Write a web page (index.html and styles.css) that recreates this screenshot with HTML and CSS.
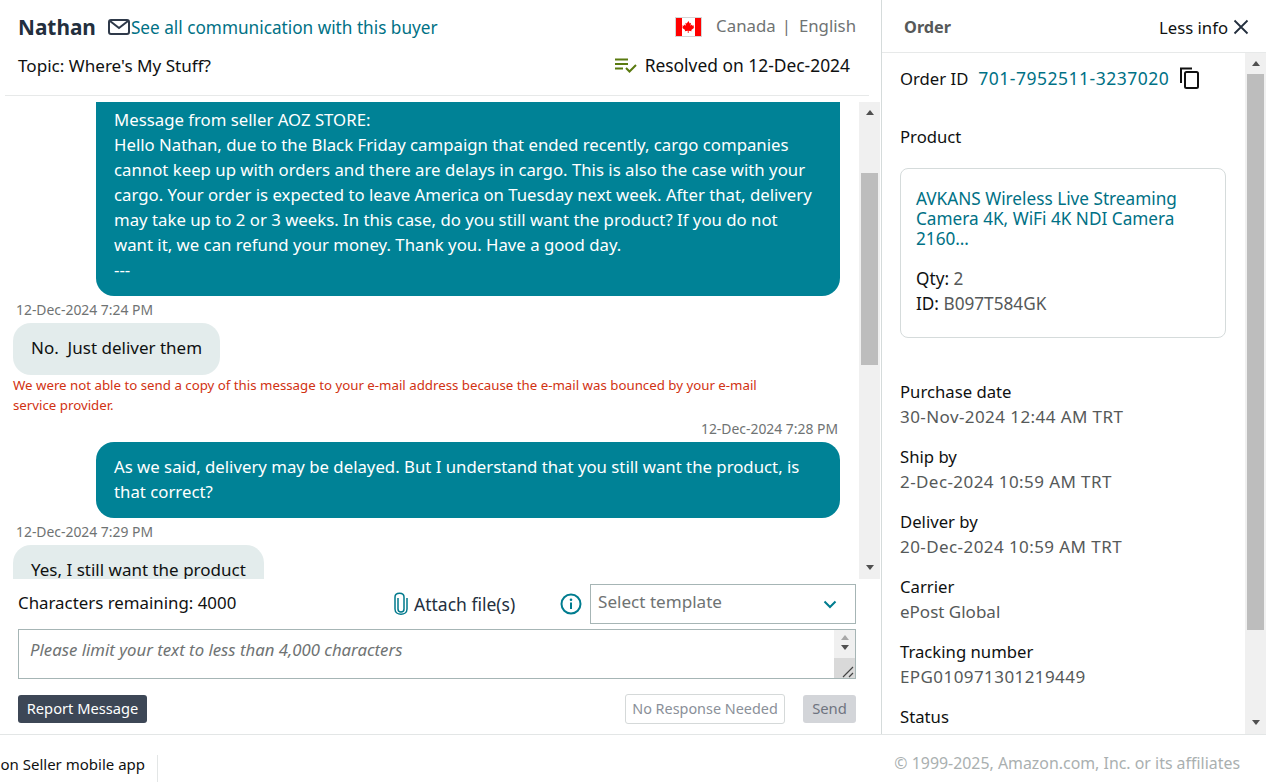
FILE: index.html
```html
<!DOCTYPE html>
<html lang="en">
<head>
<meta charset="utf-8">
<title>Buyer messages</title>
<link rel="stylesheet" href="styles.css">
</head>
<body>
<div class="page">
  <main class="main">
    <section class="convo">
      <header class="head">
        <div class="head-row first">
          <div class="who">
            <span class="name">Nathan</span>
            <svg class="mail" width="22" height="18" viewBox="0 0 22 18"><rect x="1" y="2" width="20" height="14" rx="2" fill="none" stroke="#2f3a4a" stroke-width="2"/><path d="M2 3l9 7 9-7" fill="none" stroke="#2f3a4a" stroke-width="2"/></svg>
            <a class="link see-all">See all communication with this buyer</a>
          </div>
          <div class="locale">
            <svg class="flag" width="27" height="20" viewBox="0 0 27 20"><rect x=".5" y=".5" width="26" height="19" fill="#fff" stroke="#d5d5d5"/><rect x="1" y="1" width="6" height="18" fill="#f00"/><rect x="20" y="1" width="6" height="18" fill="#f00"/><path d="M13.500 4l1.200 2.400 1.300-.6-.5 3 1.500-1.300.4 1.200 1.700-.3-.6 1.800.8.5-3 2.400.3 1.100-3-.4v2.200h-.8v-2.200l-3 .4.3-1.100-3-2.400.8-.5-.6-1.800 1.700.3.4-1.200 1.500 1.300-.5-3 1.300.6z" fill="#f00"/></svg>
            <span class="locale-text">Canada</span><span class="locale-sep">|</span><span class="locale-text">English</span>
          </div>
        </div>
        <div class="head-row second">
          <div class="topic">Topic: Where's My Stuff?</div>
          <div class="resolved">
            <svg width="24" height="16" viewBox="0 0 24 16"><path d="M1 2.500h13M1 7h13M1 11.500h8" fill="none" stroke="#5a7a10" stroke-width="2"/><path d="M12 11l3.500 3.500L22 8" fill="none" stroke="#5a7a10" stroke-width="2"/></svg>
            <span>Resolved on 12-Dec-2024</span>
          </div>
        </div>
      </header>

      <div class="thread-wrap">
        <div class="thread">
          <div class="bubble out clipped">Message from seller AOZ STORE:<br>Hello Nathan, due to the Black Friday campaign that ended recently, cargo companies cannot keep up with orders and there are delays in cargo. This is also the case with your cargo. Your order is expected to leave America on Tuesday next week. After that, delivery may take up to 2 or 3 weeks. In this case, do you still want the product? If you do not want it, we can refund your money. Thank you. Have a good day.<br>---</div>
          <div class="stamp">12-Dec-2024 7:24 PM</div>
          <div class="bubble in">No.&nbsp; Just deliver them</div>
          <div class="bounce">We were not able to send a copy of this message to your e-mail address because the e-mail was bounced by your e-mail service provider.</div>
          <div class="stamp right">12-Dec-2024 7:28 PM</div>
          <div class="bubble out">As we said, delivery may be delayed. But I understand that you still want the product, is that correct?</div>
          <div class="stamp">12-Dec-2024 7:29 PM</div>
          <div class="bubble in">Yes, I still want the product</div>
        </div>
        <div class="sb sb-thread">
          <span class="arrow up"></span>
          <div class="track"><div class="thumb thumb-thread"></div></div>
          <span class="arrow down"></span>
        </div>
      </div>

      <div class="compose">
        <div class="tools">
          <div class="remaining">Characters remaining: 4000</div>
          <div class="attach">
            <svg width="16" height="24" viewBox="0 0 16 24"><path d="M5 6v11c0 4 6 4 6 0V5c0-5-9-5-9 0v12c0 7 12 7 12 0V6" fill="none" stroke="#00798c" stroke-width="1.500"/></svg>
            <span>Attach file(s)</span>
          </div>
          <svg class="info" width="22" height="22" viewBox="0 0 22 22"><circle cx="11" cy="11" r="9.500" fill="none" stroke="#007c8f" stroke-width="2"/><circle cx="11" cy="6.800" r="1.300" fill="#007c8f"/><path d="M11 9.500v6.500" stroke="#007c8f" stroke-width="2"/></svg>
          <div class="select">
            <span>Select template</span>
            <svg width="14" height="9" viewBox="0 0 14 9"><path d="M1.500 1.500L7 7l5.500-5.500" fill="none" stroke="#007c8f" stroke-width="2"/></svg>
          </div>
        </div>
        <div class="textbox">
          <div class="placeholder">Please limit your text to less than 4,000 characters</div>
          <div class="tb-sb">
            <div class="tb-arrows"><span class="arrow up light"></span><span class="arrow down"></span></div>
            <div class="tb-grip"><svg width="14" height="12" viewBox="0 0 14 12"><path d="M2 11L12 1M8 11l4-4" stroke="#444" stroke-width="1.200" fill="none"/></svg></div>
          </div>
        </div>
        <div class="actions">
          <button class="btn report">Report Message</button>
          <div class="actions-right">
            <button class="btn noresp">No Response Needed</button>
            <button class="btn send">Send</button>
          </div>
        </div>
      </div>
    </section>

    <aside class="order">
      <header class="order-head">
        <span class="order-title">Order</span>
        <div class="less">
          <span>Less info</span>
          <svg width="16" height="16" viewBox="0 0 16 16"><path d="M1.500 1.500l13 13M14.500 1.500l-13 13" stroke="#232f3e" stroke-width="1.800" fill="none"/></svg>
        </div>
      </header>
      <div class="order-wrap">
        <div class="order-body">
          <div class="order-id">
            <span>Order ID</span>
            <a class="link id-link">701-7952511-3237020</a>
            <svg width="22" height="24" viewBox="0 0 22 24"><path d="M2 17V2.500h11" fill="none" stroke="#111" stroke-width="2"/><rect x="6" y="6" width="13" height="16" rx="1.500" fill="none" stroke="#111" stroke-width="2"/></svg>
          </div>
          <div class="product-label">Product</div>
          <div class="card">
            <a class="link card-title">AVKANS Wireless Live Streaming Camera 4K, WiFi 4K NDI Camera 2160…</a>
            <div class="card-meta">Qty: <span class="muted">2</span></div>
            <div class="card-meta">ID: <span class="muted">B097T584GK</span></div>
          </div>
          <dl class="facts">
            <div class="fact"><dt>Purchase date</dt><dd class="num">30-Nov-2024 12:44 AM TRT</dd></div>
            <div class="fact"><dt>Ship by</dt><dd class="num">2-Dec-2024 10:59 AM TRT</dd></div>
            <div class="fact"><dt>Deliver by</dt><dd class="num">20-Dec-2024 10:59 AM TRT</dd></div>
            <div class="fact"><dt>Carrier</dt><dd>ePost Global</dd></div>
            <div class="fact"><dt>Tracking number</dt><dd class="num">EPG010971301219449</dd></div>
            <div class="fact"><dt>Status</dt></div>
          </dl>
        </div>
        <div class="sb sb-order">
          <span class="arrow up"></span>
          <div class="track"><div class="thumb thumb-order"></div></div>
          <span class="arrow down"></span>
        </div>
      </div>
    </aside>
  </main>

  <footer class="foot">
    <div class="foot-left"><span>on Seller mobile app</span></div>
    <div class="copy">© 1999-2025, Amazon.com, Inc. or its affiliates</div>
  </footer>
</div>
</body>
</html>
```

FILE: styles.css
```css
* { box-sizing: border-box; }
html, body { margin: 0; height: 100%; overflow: hidden; }
body { font-family: "Noto Sans", "Liberation Sans", sans-serif; font-size: 16.7px; color: #0f1111; background: #fff; }
.page { display: flex; flex-direction: column; height: 782px; }
.main { display: flex; height: 735px; border-bottom: 1px solid #e3e6e6; }
.link { color: #007185; }

.convo { width: 882px; border-right: 1px solid #d5dbdb; display: flex; flex-direction: column; }
.head { height: 96px; margin-left: 5px; margin-right: 12px; padding: 0 13px 0 13px; border-bottom: 1px solid #e7e9e9; }
.head-row { display: flex; justify-content: space-between; align-items: center; }
.first { height: 54px; }
.second { height: 22px; }
.who { display: flex; align-items: center; }
.name { font-size: 20.8px; font-weight: 700; color: #232f3e; margin-right: 12px; }
.mail { display: block; }
.see-all { font-size: 17.2px; margin-left: 1px; }
.locale { display: flex; align-items: center; color: #6f7373; font-size: 16.8px; line-height: 22px; }
.locale-text, .locale-sep { margin-top: -2px; }
.flag { margin-right: 14px; }
.locale-sep { margin-left: 6px; margin-right: 8px; }
.topic { font-size: 17.1px; }
.resolved { display: flex; align-items: center; gap: 7px; margin-right: 6px; font-size: 17.4px; }

.thread-wrap { height: 477px; margin-top: 6px; display: flex; }
.thread { flex: 1; overflow: hidden; padding: 0 19px 0 13px; display: flex; flex-direction: column; align-items: flex-start; }
.bubble { flex: none; line-height: 25px; border-radius: 18px; padding: 12px 18px 14px; }
.out { width: 744px; margin-left: 83px; padding-right: 24px; background: #008296; color: #fff; font-size: 16.77px; }
.clipped { border-radius: 0 0 18px 18px; padding-top: 5px; height: 194px; }
.in { background: #e3ecec; font-size: 17px; padding: 12px 18px 15px; }
.stamp { flex: none; font-size: 13.9px; color: #6f7373; height: 27px; line-height: 17px; padding: 5px 0 0 3px; }
.stamp.right { align-self: flex-end; padding: 5px 2px 0 0; }
.bounce { flex: none; font-size: 13.27px; line-height: 20px; color: #d13212; width: 760px; }

.sb { width: 21px; flex: none; background: #f0f0f0; display: flex; flex-direction: column; align-items: center; }
.sb-thread { height: 477px; margin-right: 1px; }
.track { flex: 1; width: 17px; }
.thumb { background: #bdbdbd; width: 17px; }
.thumb-thread { height: 192px; margin-top: 50px; }
.thumb-order { height: 556px; }
.arrow { flex: none; display: block; width: 0; height: 0; border-left: 4px solid transparent; border-right: 4px solid transparent; }
.arrow.up { border-bottom: 5px solid #505050; margin: 8px 0; }
.arrow.down { border-top: 5px solid #505050; margin: 8px 0 9px; }

.compose { padding: 5px 25px 0 18px; }
.tools { display: flex; align-items: center; height: 40px; }
.remaining { width: 375px; font-size: 16.85px; padding-bottom: 3px; }
.attach { display: flex; align-items: center; gap: 5px; width: 167px; font-size: 17.5px; color: #232f3e; padding-bottom: 1px; }
.info { margin-right: 8px; flex: none; }
.select { flex: 1; height: 40px; border: 1px solid #a6b5b5; display: flex; align-items: center; justify-content: space-between; padding: 0 18px 6px 7px; color: #6f7373; font-size: 17.1px; }
.select svg { margin-top: 6px; }
.textbox { margin-top: 5px; height: 50px; border: 1px solid #a6b5b5; display: flex; justify-content: space-between; }
.placeholder { font-size: 16.75px; font-style: italic; color: #6f7373; padding: 8px 11px; }
.tb-sb { width: 21px; display: flex; flex-direction: column; background: #fff; }
.tb-arrows { height: 28px; display: flex; flex-direction: column; align-items: center; padding-top: 5px; gap: 5px; background: #f0f0f0; }
.tb-arrows .arrow { margin: 0; }
.arrow.light { border-bottom-color: #a8a8a8; }
.tb-grip { flex: 1; background: #d9d9d9; display: flex; align-items: flex-end; justify-content: flex-end; }
.actions { display: flex; justify-content: space-between; align-items: center; margin-top: 15px; height: 30px; }
.actions-right { display: flex; align-items: center; gap: 18px; }
.btn { font-family: inherit; border: 0; border-radius: 3px; padding: 0 0 2px; }
.report { width: 129px; height: 28px; background: #3d4756; color: #fff; font-size: 14.66px; }
.noresp { width: 160px; height: 30px; background: #fff; border: 1px solid #d5d9d9; color: #8a9099; font-size: 14.4px; }
.send { width: 53px; height: 28px; background: #d3d5d9; color: #6f7480; font-size: 14.8px; }

.order { flex: 1; display: flex; flex-direction: column; min-width: 0; }
.order-head { height: 53px; border-bottom: 1px solid #e7e9e9; display: flex; justify-content: space-between; align-items: center; padding: 2px 17px 0 22px; }
.order-title { font-weight: 700; color: #565959; font-size: 16.3px; }
.less { display: flex; align-items: center; gap: 5px; }
.order-wrap { height: 681px; display: flex; }
.order-body { flex: 1; overflow: hidden; padding: 0 19px 0 18px; min-width: 0; }
.order-id { display: flex; align-items: center; height: 50px; }
.id-link { margin-left: 10px; margin-right: 10px; font-size: 17.5px; letter-spacing: .5px; }
.product-label { margin-top: 21px; line-height: 26px; }
.card { margin-top: 18px; height: 170px; border: 1px solid #d5dbdb; border-radius: 8px; padding: 20px 15px; font-size: 17.2px; }
.card-title { display: block; line-height: 20px; margin-bottom: 17px; }
.card-meta { line-height: 25px; }
.muted { color: #565959; }
.facts { margin: 42px 0 0; }
.fact { height: 65px; }
.fact dt { line-height: 24px; }
.fact dd { margin: 0; line-height: 25px; color: #565959; font-size: 17px; }
.fact dd.num { letter-spacing: .42px; }
.sb-order { height: 681px; }

.foot { flex: 1; display: flex; justify-content: space-between; padding-top: 18px; }
.foot-left { width: 158px; height: 28px; margin-top: 2px; border-right: 1px solid #e3e6e6; display: flex; justify-content: flex-end; align-items: flex-start; padding-right: 12px; white-space: nowrap; font-size: 15px; line-height: 18px; }
.copy { color: #aab0b0; font-size: 15.9px; line-height: 20px; padding-right: 26px; }
```
